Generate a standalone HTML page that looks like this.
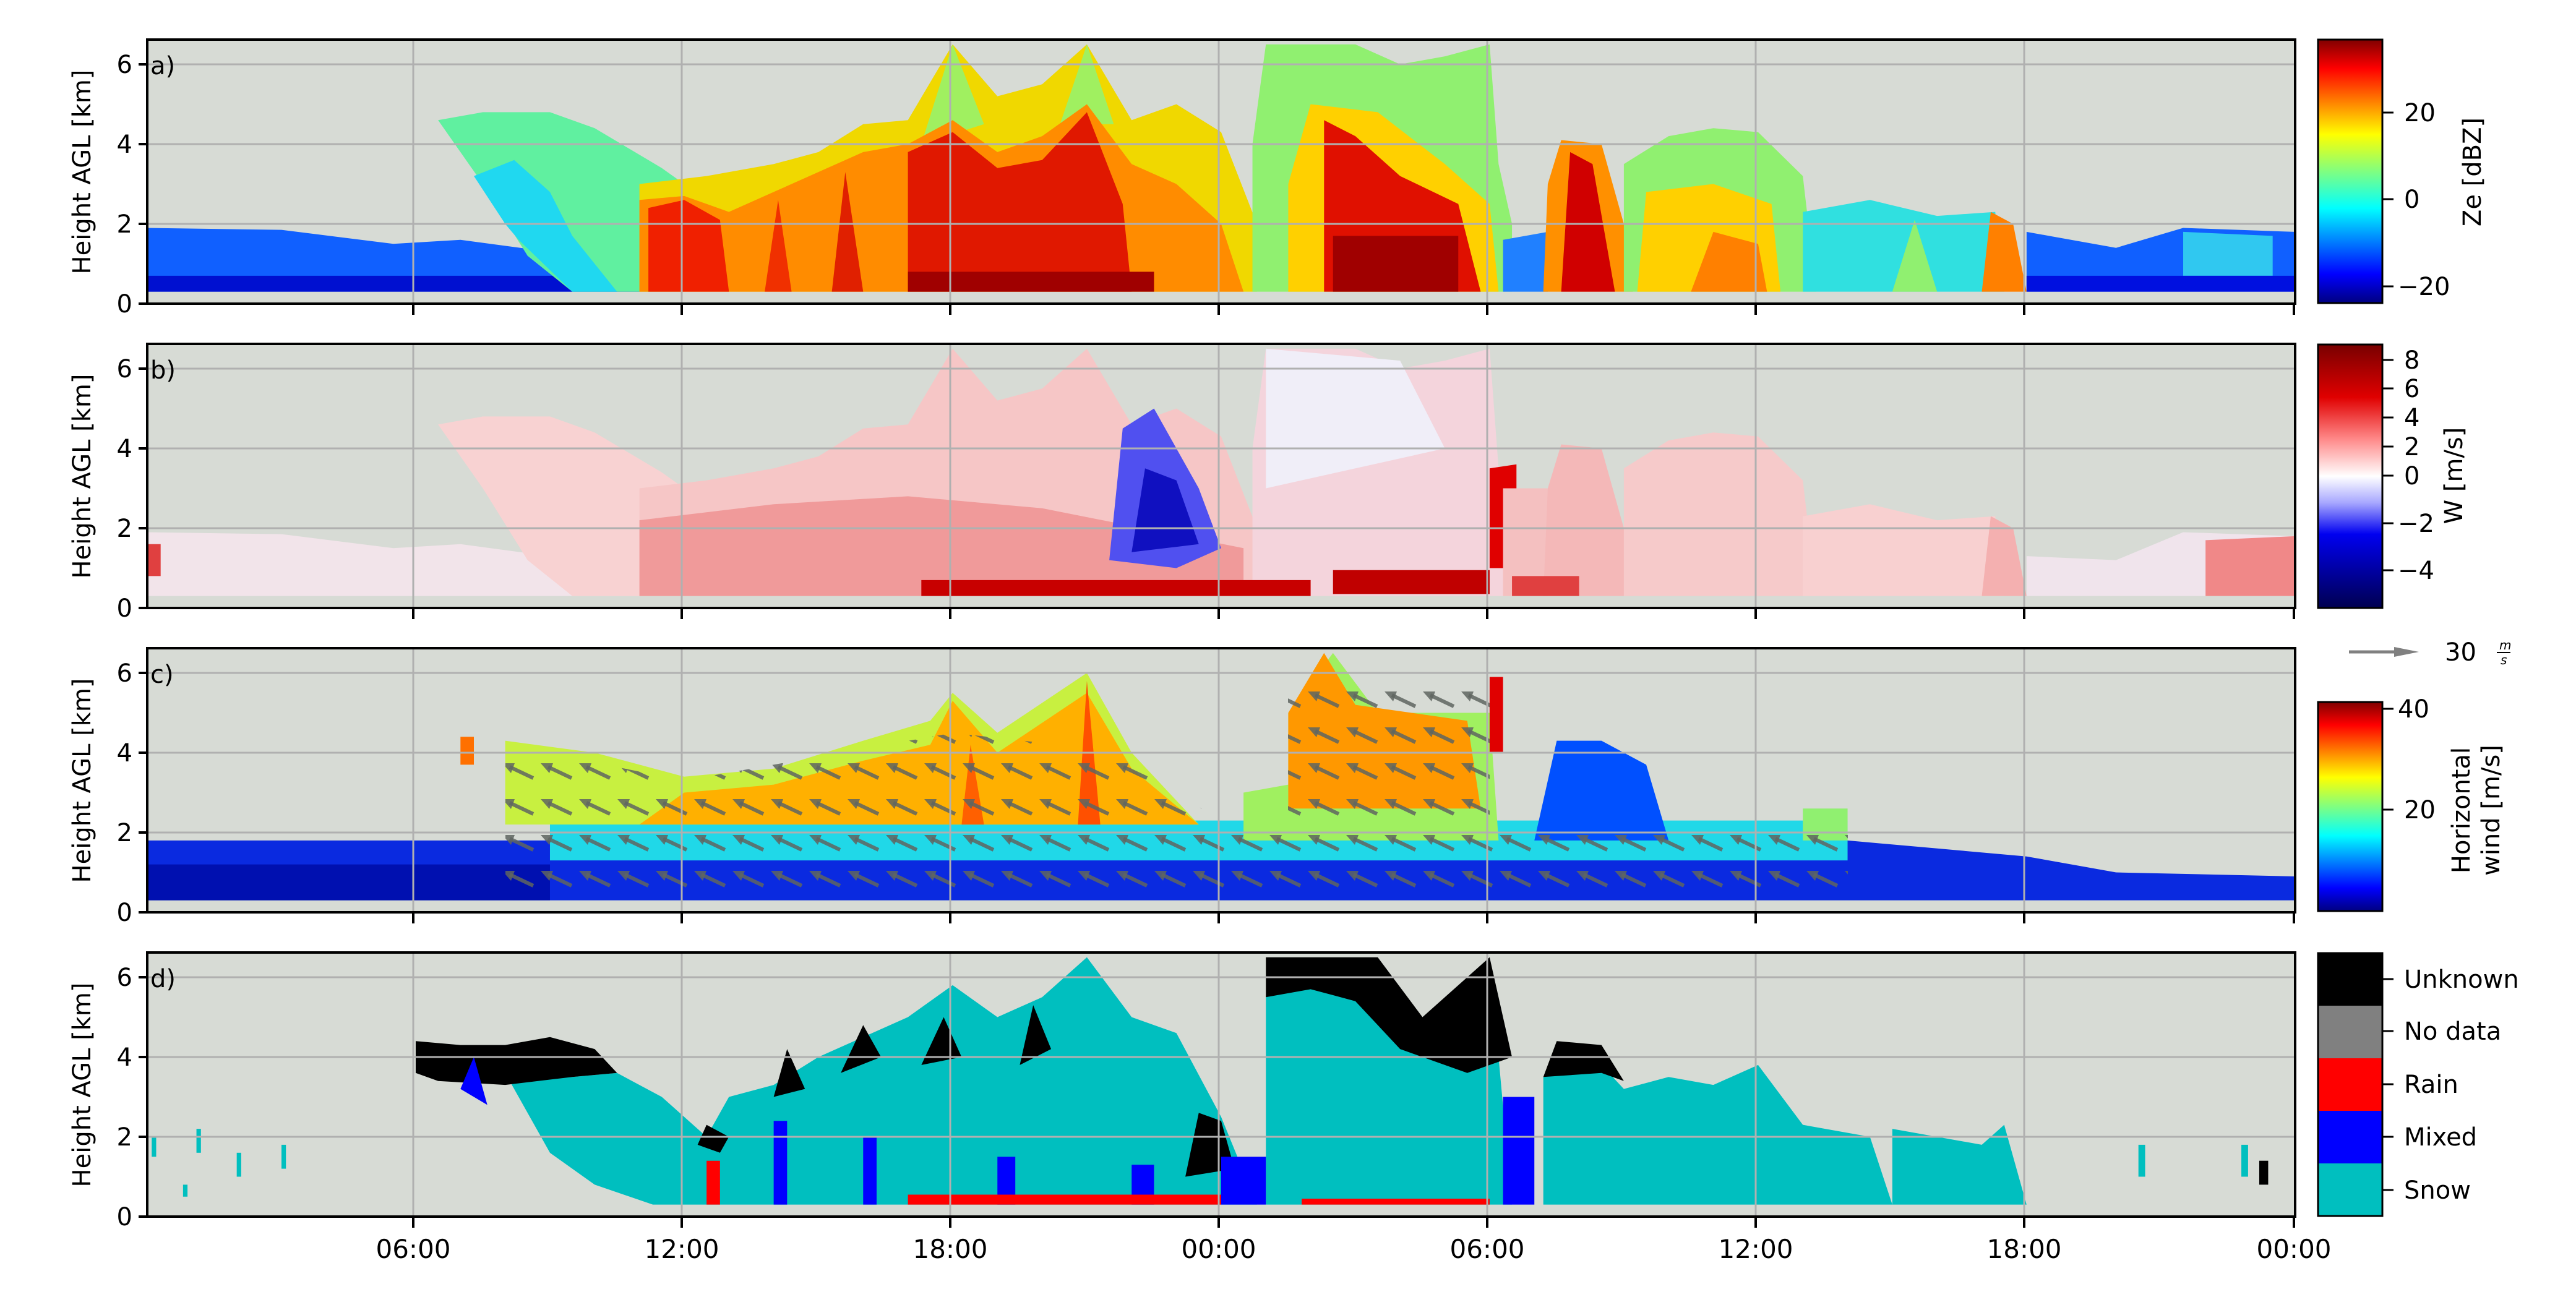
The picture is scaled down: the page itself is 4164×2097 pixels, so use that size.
<!DOCTYPE html>
<html><head><meta charset="utf-8">
<style>
html,body{margin:0;padding:0;background:#fff;}
svg{display:block;}
text{font-family:"DejaVu Sans","Liberation Sans",sans-serif;fill:#000;}
</style></head>
<body>
<svg width="4164" height="2097" viewBox="0 0 4164 2097" xmlns="http://www.w3.org/2000/svg">
<defs>
<linearGradient id="jet" x1="0" y1="0" x2="0" y2="1">
<stop offset="0" stop-color="#800000"/><stop offset="0.11" stop-color="#ff0000"/>
<stop offset="0.36" stop-color="#ffff00"/><stop offset="0.5" stop-color="#80ff80"/>
<stop offset="0.64" stop-color="#00ffff"/><stop offset="0.89" stop-color="#0000ff"/>
<stop offset="1" stop-color="#000080"/></linearGradient>
<linearGradient id="bwr" x1="0" y1="0" x2="0" y2="1">
<stop offset="0" stop-color="#780000"/><stop offset="0.2" stop-color="#e00000"/>
<stop offset="0.36" stop-color="#ff8a8a"/><stop offset="0.5" stop-color="#ffffff"/>
<stop offset="0.6" stop-color="#a8a8ff"/><stop offset="0.72" stop-color="#0000f0"/>
<stop offset="1" stop-color="#000050"/></linearGradient>
<pattern id="arr" width="62" height="58" patternUnits="userSpaceOnUse">
<line x1="56" y1="40" x2="18" y2="22" stroke="#5f6560" stroke-width="6" stroke-opacity="0.85"/>
<polygon points="6,16 26,16 20,32" fill="#5f6560" fill-opacity="0.85"/>
</pattern>
<clipPath id="arrclip"><polygon points="817,1204 1106,1262 1540,1185 1829,1217 1974,1333 2082,1320 2082,1101 2408,1101 2408,1333 2987,1333 2987,1449 817,1449"/></clipPath>
</defs>

<rect x="238" y="64" width="3472" height="427" fill="#d7dbd5"/>
<rect x="238" y="556" width="3472" height="427" fill="#d7dbd5"/>
<rect x="238" y="1048" width="3472" height="427" fill="#d7dbd5"/>
<rect x="238" y="1540" width="3472" height="427" fill="#d7dbd5"/>

<!-- PANEL A -->
<g transform="translate(238,491) scale(72.33,-64.5)">
<polygon points="0,0.3 0,1.9 3,1.85 5.5,1.5 7,1.6 9,1.3 10.5,1.2 11,0.3" fill="#1060ff"/>
<polygon points="0,0.3 0,0.7 11,0.7 11,0.3" fill="#0010d0"/>
<polygon points="6.5,4.6 7.5,4.8 9,4.8 10,4.4 11.5,3.4 12.5,2.6 12,0.3 9.5,0.3 8.5,1.2 7.5,3" fill="#60f0a0"/>
<polygon points="7.3,3.2 8,2 8.3,1.6 9.5,0.3 10.5,0.3 9.5,1.7 9,2.8 8.2,3.6" fill="#20d8f0"/>
<polygon points="11,0.3 11,3 12.5,3.2 14,3.5 15,3.8 16,4.5 17,4.6 18,6.5 19,5.2 20,5.5 21,6.5 22,4.6 23,5 24,4.3 24.8,2 24.8,0.3" fill="#f0d800"/>
<polygon points="17.3,4 18,6.5 18.7,4.5" fill="#a0f060"/>
<polygon points="20.4,4.5 21,6.5 21.6,4.5" fill="#a0f060"/>
<polygon points="11,0.3 11,2.6 12,2.7 13,2.3 14,2.8 15,3.3 16,3.8 17,4 18,4.6 19,3.8 20,4.2 21,5 22,3.5 23,3 24,2 24.5,0.3" fill="#ff8c00"/>
<polygon points="11.2,0.3 11.2,2.4 12,2.6 12.8,2.1 13,0.3" fill="#f02000"/>
<polygon points="15.3,0.3 15.6,3.3 16,0.3" fill="#e02000"/>
<polygon points="13.8,0.3 14.1,2.6 14.4,0.3" fill="#f03000"/>
<polygon points="17,0.3 17,3.8 18,4.3 19,3.4 20,3.6 21,4.8 21.8,2.5 22,0.3" fill="#e01800"/>
<polygon points="17,0.3 17,0.8 22.5,0.8 22.5,0.3" fill="#a00000"/>
<polygon points="24.7,0.3 24.7,4 25,6.5 27,6.5 28,6 29,6.2 30,6.5 30.2,3.5 30.5,2 30.5,0.3" fill="#90f070"/>
<polygon points="25.5,0.3 25.5,3 26,5 27.5,4.8 29,3.5 30,2.5 30.2,0.3" fill="#ffd000"/>
<polygon points="26.3,0.3 26.3,4.6 27,4.2 28,3.2 29.3,2.5 29.8,0.3" fill="#e01000"/>
<polygon points="26.5,0.3 26.5,1.7 29.3,1.7 29.3,0.3" fill="#a00000"/>
<polygon points="30.3,0.3 30.3,1.6 31.3,1.8 31.3,0.3" fill="#2080ff"/>
<polygon points="31.2,0.3 31.3,3 31.6,4.1 32.5,4 33,2 33.2,0.3" fill="#ff9000"/>
<polygon points="31.6,0.3 31.8,3.8 32.3,3.5 32.8,0.3" fill="#d00000"/>
<polygon points="33,0.3 33,3.5 34,4.2 35,4.4 36,4.3 37,3.2 37.3,0.3" fill="#90f070"/>
<polygon points="33.3,0.3 33.5,2.8 35,3 36.3,2.5 36.5,0.3" fill="#ffd000"/>
<polygon points="34.5,0.3 35,1.8 36,1.5 36.2,0.3" fill="#ff8000"/>
<polygon points="37,0.3 37,2.3 38.5,2.6 40,2.2 41.3,2.3 41.5,0.3" fill="#30e0e0"/>
<polygon points="39,0.3 39.5,2.1 40,0.3" fill="#90f070"/>
<polygon points="41,0.3 41.2,2.3 41.7,2 42,0.3" fill="#ff8000"/>
<polygon points="42,0.3 42,1.8 44,1.4 45.5,1.9 48,1.8 48,0.3" fill="#1060ff"/>
<polygon points="45.5,0.7 45.5,1.8 47.5,1.7 47.5,0.7" fill="#30c8f0"/>
<polygon points="42,0.3 42,0.7 48,0.7 48,0.3" fill="#0010e0"/>
</g>

<!-- PANEL B -->
<g transform="translate(238,983) scale(72.33,-64.5)">
<polygon points="0,0.3 0,1.9 3,1.85 5.5,1.5 7,1.6 9,1.3 10.5,1.2 11,0.3" fill="#f2e4ea"/>
<polygon points="0,0.8 0,1.6 0.3,1.6 0.3,0.8" fill="#e04040"/>
<polygon points="6.5,4.6 7.5,4.8 9,4.8 10,4.4 11.5,3.4 12.5,2.6 12,0.3 9.5,0.3 8.5,1.2 7.5,3" fill="#f8d2d2"/>
<polygon points="11,0.3 11,3 12.5,3.2 14,3.5 15,3.8 16,4.5 17,4.6 18,6.5 19,5.2 20,5.5 21,6.5 22,4.6 23,5 24,4.3 24.8,2 24.8,0.3" fill="#f6c6c6"/>
<polygon points="11,0.3 11,2.2 14,2.6 17,2.8 20,2.5 24.5,1.5 24.5,0.3" fill="#f09a9a"/>
<polygon points="21.5,1.2 21.8,4.5 22.5,5 23.5,3 24,1.5 23,1" fill="#5050f0"/>
<polygon points="22,1.4 22.3,3.5 23,3.2 23.5,1.6" fill="#1010c0"/>
<polygon points="24.7,0.3 24.7,4 25,6.5 27,6.5 28,6 29,6.2 30,6.5 30.2,3.5 30.5,2 30.5,0.3" fill="#f4d4dc"/>
<polygon points="25,3 25,6.5 28,6.2 29,4 27,3.5" fill="#f0eef8"/>
<polygon points="30,1 30,3.5 30.6,3.6 30.6,1" fill="#e00000"/>
<polygon points="30.3,0.3 30.3,3 31.3,3 31.3,0.3" fill="#f4c0c0"/>
<polygon points="31.2,0.3 31.3,3 31.6,4.1 32.5,4 33,2 33.2,0.3" fill="#f4b8b8"/>
<polygon points="33,0.3 33,3.5 34,4.2 35,4.4 36,4.3 37,3.2 37.3,0.3" fill="#f6caca"/>
<polygon points="37,0.3 37,2.3 38.5,2.6 40,2.2 41.3,2.3 41.5,0.3" fill="#f8d0d0"/>
<polygon points="41,0.3 41.2,2.3 41.7,2 42,0.3" fill="#f4b0b0"/>
<polygon points="42,0.3 42,1.3 44,1.2 45.5,1.9 48,1.8 48,0.3" fill="#f0e4ec"/>
<polygon points="46,0.3 46,1.7 48,1.8 48,0.3" fill="#f08888"/>
<polygon points="17.3,0.3 17.3,0.7 26,0.7 26,0.3" fill="#c80000"/>
<polygon points="26.5,0.35 26.5,0.95 30,0.95 30,0.35" fill="#c00000"/>
<polygon points="30.5,0.3 30.5,0.8 32,0.8 32,0.3" fill="#e04040"/>
</g>

<!-- PANEL C -->
<g transform="translate(238,1475) scale(72.33,-64.5)">
<polygon points="0,0.3 0,1.8 38,1.8 40,1.6 42,1.4 44,1.0 48,0.9 48,0.3" fill="#0a2ae0"/>
<polygon points="0,0.3 0,1.2 9,1.2 9,0.3" fill="#0010b0"/>
<polygon points="9,1.3 9,2.3 38,2.3 38,1.3" fill="#20d8e8"/>
<polygon points="8,2.2 8,4.3 10,4 12,3.4 14,3.6 16,4.3 17.5,4.8 18,5.5 19,4.5 21,6 22,4 23.5,2.2" fill="#c8f040"/>
<polygon points="7,3.7 7,4.4 7.3,4.4 7.3,3.7" fill="#ff7000"/>
<polygon points="11,2.2 12,3 14,3.2 16,3.8 17.5,4.2 18,5.3 19,4 21,5.5 22,3.6 23.5,2.2" fill="#ffb000"/>
<polygon points="20.8,2.2 21,5.8 21.3,2.2" fill="#ff5000"/>
<polygon points="18.2,2.2 18.4,4.2 18.7,2.2" fill="#ff6000"/>
<polygon points="24.5,1.8 24.5,3 25.5,3.2 25.5,5 26.5,6.5 27.5,5 30,5 30.2,1.8" fill="#a0f060"/>
<polygon points="25.5,2.6 25.5,5 26.3,6.5 27,5.2 29.5,4.8 29.8,2.6" fill="#ff9800"/>
<polygon points="30,4 30,5.9 30.3,5.9 30.3,4" fill="#e00000"/>
<polygon points="31,1.8 31.5,4.3 32.5,4.3 33.5,3.7 34,1.8" fill="#0050ff"/>
<polygon points="37,1.8 37,2.6 38,2.6 38,1.8" fill="#90f070"/>
</g>
<rect x="817" y="1100" width="2170" height="350" fill="url(#arr)" clip-path="url(#arrclip)"/>

<!-- PANEL D -->
<g transform="translate(238,1967) scale(72.33,-64.5)">
<polygon points="11.3,0.3 10,0.8 9,1.6 8.1,3.4 9.5,3.5 10.5,3.6 11.5,3 12.5,2 13,3 14,3.3 15,4 16,4.5 17,5 18,5.8 19,5 20,5.5 21,6.5 22,5 23,4.6 24,2.5 24.8,0.3" fill="#00bfbf"/>
<polygon points="25,0.3 25,5.5 26,6 27,5.5 28,4.5 29.5,4 30.2,4 30.5,0.3" fill="#00bfbf"/>
<polygon points="31.2,0.3 31.2,3.5 32.5,3.8 33,3.2 34,3.5 35,3.3 36,3.8 37,2.3 38.5,2 39,0.3" fill="#00bfbf"/>
<polygon points="39,0.3 39,2.2 41,1.8 41.5,2.3 42,0.3" fill="#00bfbf"/>
<polygon points="6,3.6 6,4.4 7,4.3 8,4.3 9,4.5 10,4.2 10.5,3.6 9.5,3.5 8,3.3 6.5,3.4" fill="#000"/>
<polygon points="7,3.2 7.3,4 7.6,2.8" fill="#0000ff"/>
<polygon points="25,5.5 25,6.5 27.5,6.5 28.5,5 30,6.5 30.5,4 29.5,3.6 28,4.2 27,5.4 26,5.7" fill="#000"/>
<polygon points="31.2,3.5 31.5,4.4 32.5,4.3 33,3.4 32.5,3.6" fill="#000"/>
<polygon points="12.3,1.8 12.5,2.3 13,2 12.8,1.6" fill="#000"/>
<polygon points="14,3 14.3,4.2 14.7,3.2" fill="#000"/>
<polygon points="15.5,3.6 16,4.8 16.4,4" fill="#000"/>
<polygon points="17.3,3.8 17.8,5 18.2,4" fill="#000"/>
<polygon points="19.5,3.8 19.8,5.3 20.2,4.2" fill="#000"/>
<polygon points="23.2,1 23.5,2.6 24,2.4 24.3,1.2" fill="#000"/>
<polygon points="14,0.3 14,2.4 14.3,2.4 14.3,0.3" fill="#0000ff"/>
<polygon points="16,0.3 16,2 16.3,2 16.3,0.3" fill="#0000ff"/>
<polygon points="19,0.3 19,1.5 19.4,1.5 19.4,0.3" fill="#0000ff"/>
<polygon points="22,0.3 22,1.3 22.5,1.3 22.5,0.3" fill="#0000ff"/>
<polygon points="24,0.3 24,1.5 25,1.5 25,0.3" fill="#0000ff"/>
<polygon points="30.3,0.3 30.3,3 31,3 31,0.3" fill="#0000ff"/>
<polygon points="12.5,0.3 12.5,1.4 12.8,1.4 12.8,0.3" fill="#ff0000"/>
<polygon points="17,0.3 17,0.55 24,0.55 24,0.3" fill="#ff0000"/>
<polygon points="25.8,0.3 25.8,0.45 30,0.45 30,0.3" fill="#ff0000"/>
<rect x="0.1" y="1.5" width="0.1" height="0.5" fill="#00bfbf"/>
<rect x="1.1" y="1.6" width="0.1" height="0.6" fill="#00bfbf"/>
<rect x="2" y="1" width="0.1" height="0.6" fill="#00bfbf"/>
<rect x="3" y="1.2" width="0.1" height="0.6" fill="#00bfbf"/>
<rect x="0.8" y="0.5" width="0.1" height="0.3" fill="#00bfbf"/>
<rect x="44.5" y="1" width="0.15" height="0.8" fill="#00bfbf"/>
<rect x="47.2" y="0.8" width="0.2" height="0.6" fill="#000"/>
<rect x="46.8" y="1" width="0.15" height="0.8" fill="#00bfbf"/>
</g>

<g stroke="#b0b0b0" stroke-width="3">
<path d="M668,64V491M1102,64V491M1536,64V491M1970,64V491M2404,64V491M2838,64V491M3272,64V491"/>
<path d="M668,556V983M1102,556V983M1536,556V983M1970,556V983M2404,556V983M2838,556V983M3272,556V983"/>
<path d="M668,1048V1475M1102,1048V1475M1536,1048V1475M1970,1048V1475M2404,1048V1475M2838,1048V1475M3272,1048V1475"/>
<path d="M668,1540V1967M1102,1540V1967M1536,1540V1967M1970,1540V1967M2404,1540V1967M2838,1540V1967M3272,1540V1967"/>
<path d="M238,362H3710M238,233H3710M238,104H3710"/>
<path d="M238,854H3710M238,725H3710M238,596H3710"/>
<path d="M238,1346H3710M238,1217H3710M238,1088H3710"/>
<path d="M238,1838H3710M238,1709H3710M238,1580H3710"/>
</g>

<g fill="none" stroke="#000" stroke-width="4">
<rect x="238" y="64" width="3472" height="427"/>
<rect x="238" y="556" width="3472" height="427"/>
<rect x="238" y="1048" width="3472" height="427"/>
<rect x="238" y="1540" width="3472" height="427"/>
<path d="M668,491v18M1102,491v18M1536,491v18M1970,491v18M2404,491v18M2838,491v18M3272,491v18M3708,491v18"/>
<path d="M668,983v18M1102,983v18M1536,983v18M1970,983v18M2404,983v18M2838,983v18M3272,983v18M3708,983v18"/>
<path d="M668,1475v18M1102,1475v18M1536,1475v18M1970,1475v18M2404,1475v18M2838,1475v18M3272,1475v18M3708,1475v18"/>
<path d="M668,1967v18M1102,1967v18M1536,1967v18M1970,1967v18M2404,1967v18M2838,1967v18M3272,1967v18M3708,1967v18"/>
<path d="M224,491h14M224,362h14M224,233h14M224,104h14"/>
<path d="M224,983h14M224,854h14M224,725h14M224,596h14"/>
<path d="M224,1475h14M224,1346h14M224,1217h14M224,1088h14"/>
<path d="M224,1967h14M224,1838h14M224,1709h14M224,1580h14"/>
</g>

<g font-size="40" text-anchor="end">
<text x="214" y="505">0</text><text x="214" y="376">2</text><text x="214" y="247">4</text><text x="214" y="118">6</text>
<text x="214" y="997">0</text><text x="214" y="868">2</text><text x="214" y="739">4</text><text x="214" y="610">6</text>
<text x="214" y="1489">0</text><text x="214" y="1360">2</text><text x="214" y="1231">4</text><text x="214" y="1102">6</text>
<text x="214" y="1981">0</text><text x="214" y="1852">2</text><text x="214" y="1723">4</text><text x="214" y="1594">6</text>
</g>
<g font-size="40">
<text x="243" y="120">a)</text><text x="243" y="612">b)</text><text x="243" y="1104">c)</text><text x="243" y="1596">d)</text>
</g>
<g font-size="40" text-anchor="middle">
<text transform="translate(146,278) rotate(-90)">Height AGL [km]</text>
<text transform="translate(146,770) rotate(-90)">Height AGL [km]</text>
<text transform="translate(146,1262) rotate(-90)">Height AGL [km]</text>
<text transform="translate(146,1754) rotate(-90)">Height AGL [km]</text>
</g>
<g font-size="42" text-anchor="middle">
<text x="668" y="2034">06:00</text><text x="1102" y="2034">12:00</text><text x="1536" y="2034">18:00</text>
<text x="1970" y="2034">00:00</text><text x="2404" y="2034">06:00</text><text x="2838" y="2034">12:00</text>
<text x="3272" y="2034">18:00</text><text x="3708" y="2034">00:00</text>
</g>

<rect x="3747" y="64" width="104" height="426" fill="url(#jet)" stroke="#000" stroke-width="3"/>
<rect x="3747" y="557" width="104" height="426" fill="url(#bwr)" stroke="#000" stroke-width="3"/>
<rect x="3747" y="1135" width="104" height="338" fill="url(#jet)" stroke="#000" stroke-width="3"/>
<rect x="3747" y="1541" width="104" height="85" fill="#000"/>
<rect x="3747" y="1626" width="104" height="85" fill="#808080"/>
<rect x="3747" y="1711" width="104" height="85" fill="#ff0000"/>
<rect x="3747" y="1796" width="104" height="85" fill="#0000ff"/>
<rect x="3747" y="1881" width="104" height="85" fill="#00bfbf"/>
<rect x="3747" y="1541" width="104" height="425" fill="none" stroke="#000" stroke-width="3"/>
<g stroke="#000" stroke-width="3">
<path d="M3851,182h18M3851,322h18M3851,463h18"/>
<path d="M3851,582h18M3851,628h18M3851,675h18M3851,722h18M3851,769h18M3851,846h18M3851,922h18"/>
<path d="M3851,1146h18M3851,1309h18"/>
<path d="M3851,1583h18M3851,1667h18M3851,1753h18M3851,1838h18M3851,1924h18"/>
</g>
<g font-size="40">
<text x="3886" y="196">20</text><text x="3886" y="336">0</text><text x="3876" y="477">−20</text>
<text x="3886" y="596">8</text><text x="3886" y="642">6</text><text x="3886" y="689">4</text><text x="3886" y="736">2</text>
<text x="3886" y="783">0</text><text x="3876" y="860">−2</text><text x="3876" y="936">−4</text>
<text x="3876" y="1160">40</text><text x="3886" y="1323">20</text>
<text x="3886" y="1597">Unknown</text><text x="3886" y="1681">No data</text><text x="3886" y="1767">Rain</text>
<text x="3886" y="1852">Mixed</text><text x="3886" y="1938">Snow</text>
</g>
<g font-size="40" text-anchor="middle">
<text transform="translate(4010,278) rotate(-90)">Ze [dBZ]</text>
<text transform="translate(3980,769) rotate(-90)">W [m/s]</text>
<text transform="translate(3992,1310) rotate(-90)">Horizontal</text>
<text transform="translate(4040,1310) rotate(-90)">wind [m/s]</text>
</g>
<line x1="3797" y1="1054" x2="3880" y2="1054" stroke="#808080" stroke-width="5"/>
<polygon points="3870,1046 3910,1054 3870,1062" fill="#808080"/>
<text x="3952" y="1068" font-size="40">30</text>
<text x="4040" y="1050" font-size="20" font-style="italic">m</text>
<line x1="4036" y1="1055" x2="4058" y2="1055" stroke="#000" stroke-width="2"/>
<text x="4042" y="1074" font-size="20" font-style="italic">s</text>
</svg>
</body></html>
